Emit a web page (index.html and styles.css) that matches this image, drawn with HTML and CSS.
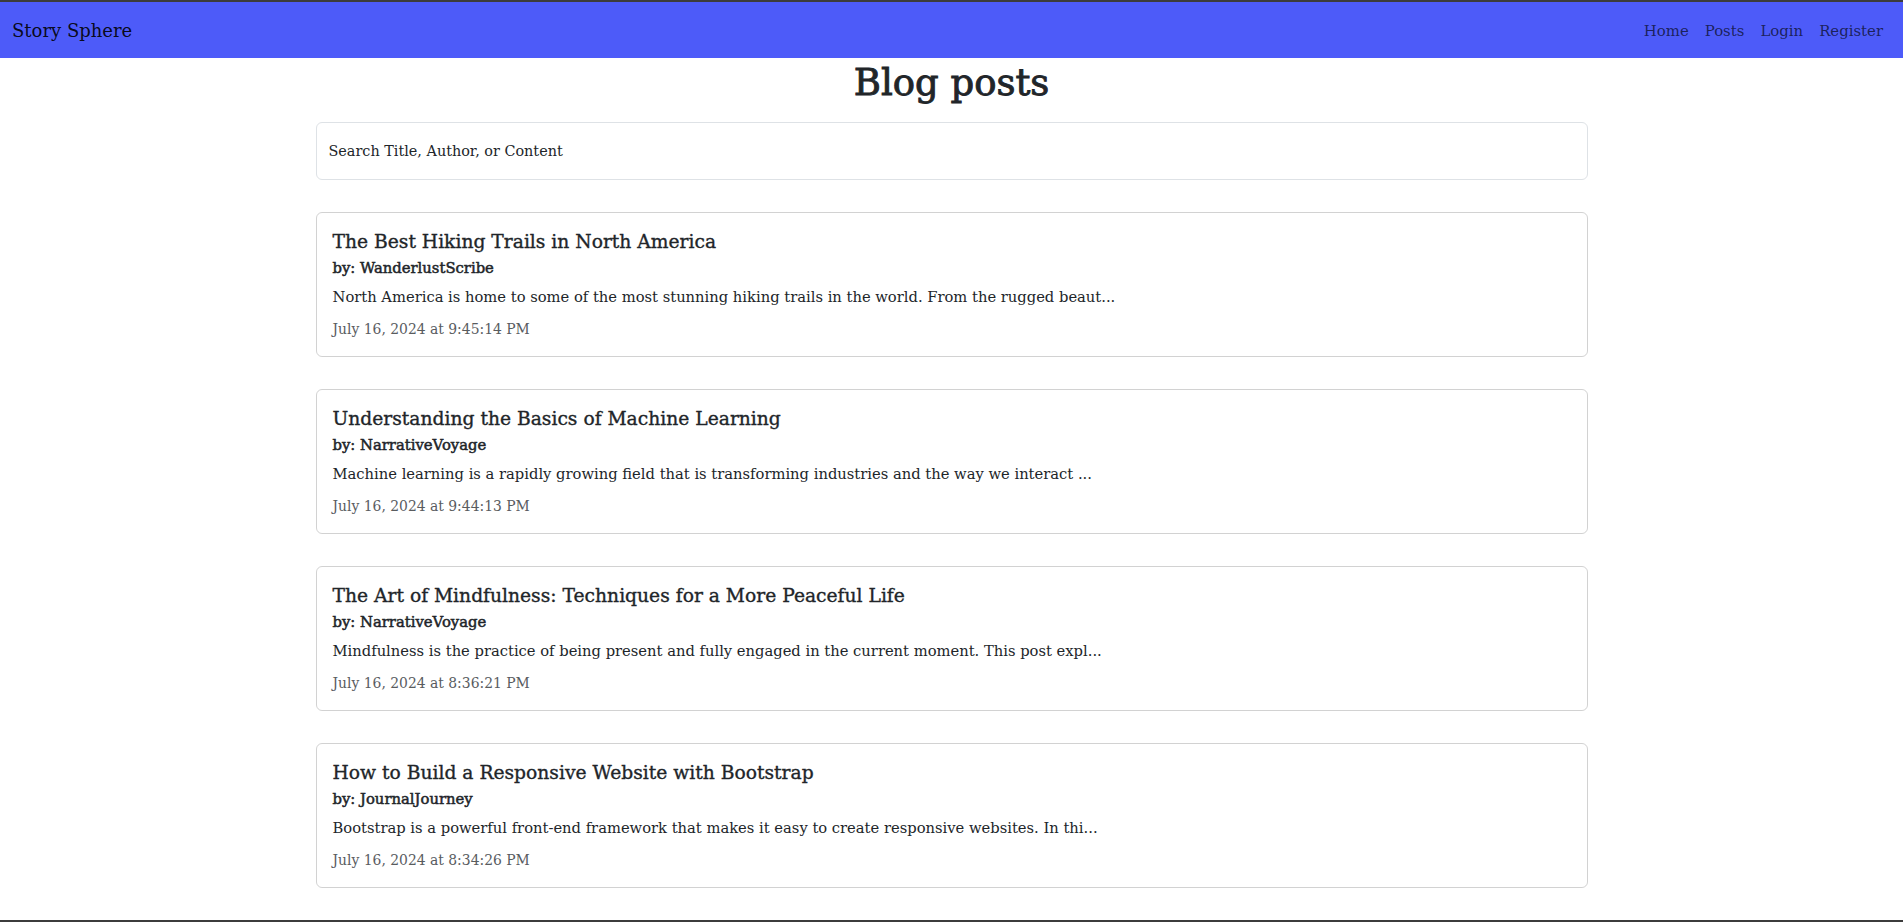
FILE: index.html
```html
<!DOCTYPE html>
<html lang="en">
<head>
<meta charset="utf-8">
<title>Story Sphere</title>
<link rel="stylesheet" href="styles.css">
</head>
<body>
<nav class="navbar">
  <a class="brand" href="#">Story Sphere</a>
  <ul class="nav">
    <li><a href="#">Home</a></li>
    <li><a href="#">Posts</a></li>
    <li><a href="#">Login</a></li>
    <li><a href="#">Register</a></li>
  </ul>
</nav>
<main class="container">
  <h1 class="page-title">Blog posts</h1>
  <div class="search">
    <span class="search-label">Search Title, Author, or Content</span>
  </div>
  <div class="posts">
    <article class="card">
      <h5 class="card-title">The Best Hiking Trails in North America</h5>
      <h6 class="card-subtitle">by: WanderlustScribe</h6>
      <p class="card-text">North America is home to some of the most stunning hiking trails in the world. From the rugged beaut...</p>
      <p class="card-date">July 16, 2024 at 9:45:14 PM</p>
    </article>
    <article class="card">
      <h5 class="card-title">Understanding the Basics of Machine Learning</h5>
      <h6 class="card-subtitle">by: NarrativeVoyage</h6>
      <p class="card-text">Machine learning is a rapidly growing field that is transforming industries and the way we interact ...</p>
      <p class="card-date">July 16, 2024 at 9:44:13 PM</p>
    </article>
    <article class="card">
      <h5 class="card-title">The Art of Mindfulness: Techniques for a More Peaceful Life</h5>
      <h6 class="card-subtitle">by: NarrativeVoyage</h6>
      <p class="card-text">Mindfulness is the practice of being present and fully engaged in the current moment. This post expl...</p>
      <p class="card-date">July 16, 2024 at 8:36:21 PM</p>
    </article>
    <article class="card">
      <h5 class="card-title">How to Build a Responsive Website with Bootstrap</h5>
      <h6 class="card-subtitle">by: JournalJourney</h6>
      <p class="card-text">Bootstrap is a powerful front-end framework that makes it easy to create responsive websites. In thi...</p>
      <p class="card-date">July 16, 2024 at 8:34:26 PM</p>
    </article>
  </div>
</main>
<div class="window-edge"></div>
</body>
</html>
```
FILE: styles.css
```css
* { box-sizing: border-box; }
html, body { margin: 0; padding: 0; }
body {
  font-family: "DejaVu Serif", "Liberation Serif", serif;
  font-size: 14.4px;
  line-height: 24px;
  color: #212529;
  background: #fff;
  overflow: hidden;
  height: 922px;
}
.navbar {
  display: flex;
  align-items: center;
  justify-content: space-between;
  height: 58px;
  border-top: 2px solid #3c3c3c;
  background: #4d5bf9;
  padding: 2px 12px 0;
}
.brand {
  font-size: 18px;
  line-height: 30px;
  color: rgba(0, 0, 0, 0.9);
  text-decoration: none;
}
.nav {
  display: flex;
  list-style: none;
  margin: 0;
  padding: 0;
}
.nav a {
  display: block;
  padding: 8px 8px;
  font-size: 14.9px;
  line-height: 24px;
  color: rgba(0, 0, 0, 0.65);
  text-decoration: none;
}
.container {
  width: 1272px;
  margin: 0 auto;
}
.page-title {
  margin: 1px 0 15px;
  text-align: center;
  font-size: 37px;
  line-height: 48px;
  font-weight: 400;
  color: #212529;
  -webkit-text-stroke: 0.9px #212529;
}
.search {
  height: 58px;
  border: 1px solid #dee2e6;
  border-radius: 6px;
  padding: 16px 12px;
}
.search-label {
  display: block;
  line-height: 24px;
  color: #212529;
}
.posts {
  display: flex;
  flex-direction: column;
  gap: 32px;
  margin-top: 32px;
}
.card {
  border: 1px solid rgba(0, 0, 0, 0.175);
  border-radius: 6px;
  padding: 17px 16px 15px;
}
.card-title {
  margin: 0 0 4px;
  font-size: 18.7px;
  line-height: 24px;
  font-weight: 400;
  -webkit-text-stroke: 0.35px #212529;
}
.card-subtitle {
  margin: 0;
  font-size: 14.8px;
  line-height: 19px;
  font-weight: 400;
  -webkit-text-stroke: 0.5px #212529;
}
.card-text {
  margin: 8px 0 8px;
  font-size: 14.72px;
}
.card-date {
  margin: 0;
  font-size: 13.9px;
  color: #595c5f;
}
.window-edge {
  position: fixed;
  left: 0;
  right: 0;
  bottom: 0;
  height: 2px;
  background: #3c3c3c;
}
```
